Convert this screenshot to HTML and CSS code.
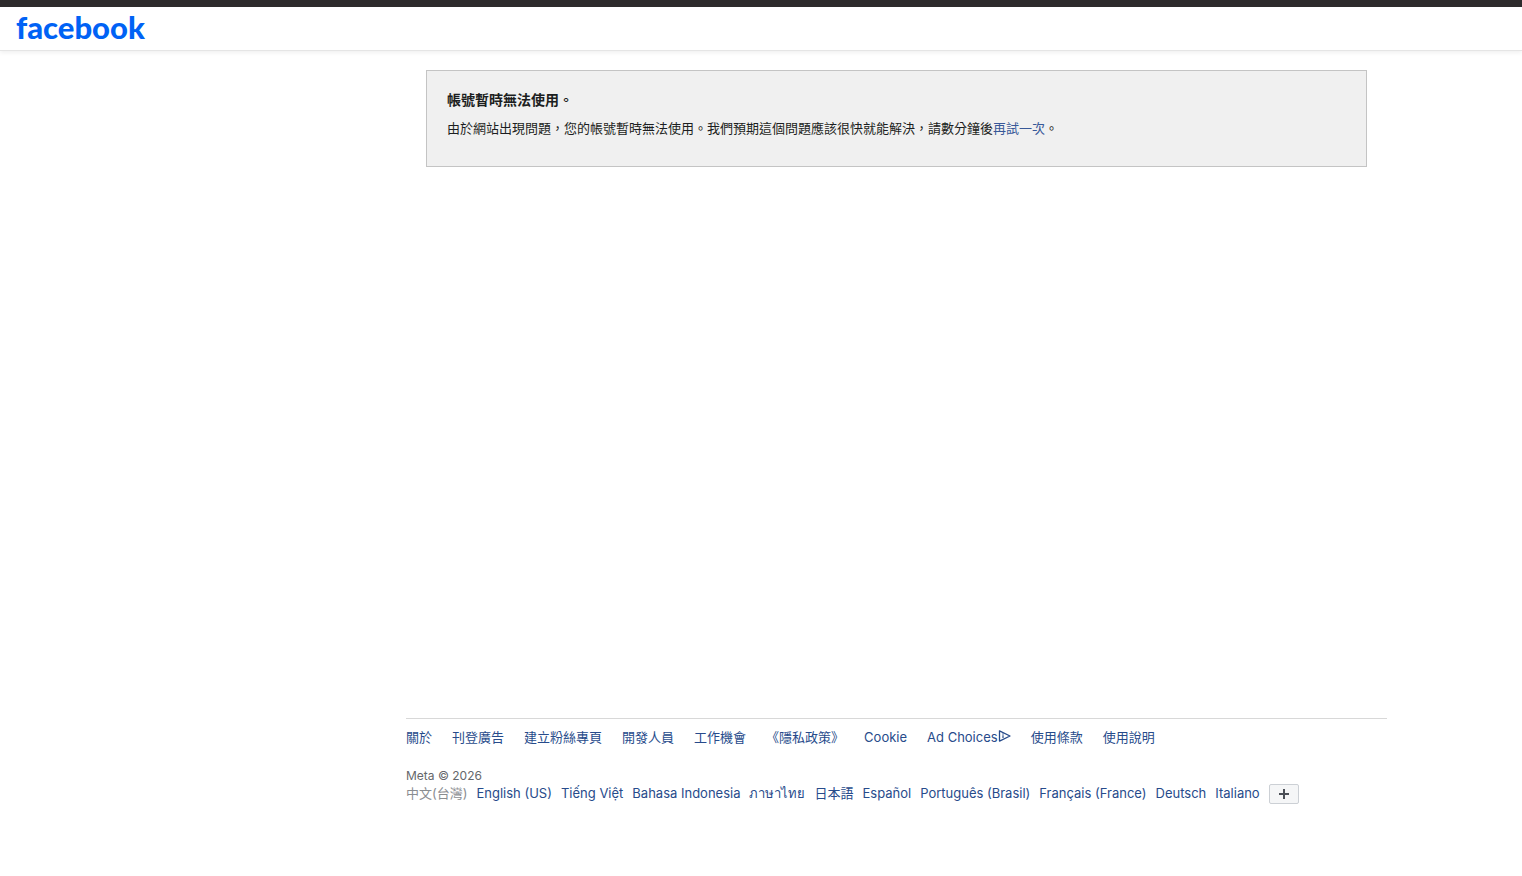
FILE: index.html
```html
<!DOCTYPE html>
<html lang="zh-Hant">
<head>
    <meta charset="utf-8">
    <meta name="viewport" content="width=device-width, initial-scale=1">
    <link rel="stylesheet" href="styles.css">
    <title>Facebook</title>
</head>
<body>
    <header class="header">
        <a class="logo" href="#">facebook</a>
    </header>
    <main class="content">
        <div class="notice">
            <h1>帳號暫時無法使用。</h1>
            <p>由於網站出現問題，您的帳號暫時無法使用。我們預期這個問題應該很快就能解決，請數分鐘後<a href="#">再試一次</a>。</p>
        </div>
    </main>
    <footer class="footer">
        <ul class="links">
            <li><a href="#">關於</a></li>
            <li><a href="#">刊登廣告</a></li>
            <li><a href="#">建立粉絲專頁</a></li>
            <li><a href="#">開發人員</a></li>
            <li><a href="#">工作機會</a></li>
            <li><a href="#">《隱私政策》</a></li>
            <li><a href="#">Cookie</a></li>
            <li>
                <a href="#">Ad Choices<svg width="13" height="12" viewBox="0 0 13 12" aria-hidden="true">
                    <path d="M1.5 0.9V11.1L12 6Z" fill="none" stroke="currentColor" stroke-width="1.3" stroke-linejoin="round"/>
                    <path d="M5 5.2V8" stroke="currentColor" stroke-width="1.2"/>
                    <circle cx="5" cy="4" r="0.7" fill="currentColor"/>
                </svg></a>
            </li>
            <li><a href="#">使用條款</a></li>
            <li><a href="#">使用說明</a></li>
        </ul>
        <div class="copyright">Meta © 2026</div>
        <ul class="languages">
            <li>中文(台灣)</li>
            <li><a href="#" lang="en">English (US)</a></li>
            <li><a href="#" lang="vi">Tiếng Việt</a></li>
            <li><a href="#" lang="id">Bahasa Indonesia</a></li>
            <li><a href="#" lang="th">ภาษาไทย</a></li>
            <li><a href="#" lang="ja">日本語</a></li>
            <li><a href="#" lang="es">Español</a></li>
            <li><a href="#" lang="pt">Português (Brasil)</a></li>
            <li><a href="#" lang="fr">Français (France)</a></li>
            <li><a href="#" lang="de">Deutsch</a></li>
            <li><a href="#" lang="it">Italiano</a></li>
            <li>
                <button class="more" type="button" aria-label="顯示更多語言">
                    <svg width="10" height="10" viewBox="0 0 10 10" aria-hidden="true"><path d="M5 0V10M0 5H10" stroke="currentColor" stroke-width="2"/></svg>
                </button>
            </li>
        </ul>
    </footer>
</body>
</html>
```

FILE: styles.css
```css
* { margin: 0; padding: 0; box-sizing: border-box; }
body { min-height: 100vh; display: flex; flex-direction: column; background: #fff; color: #1c1e21; font-family: Inter, "Noto Sans CJK TC", sans-serif; font-size: 13px; line-height: 18px; border-top: 7px solid #2d2b2c; }
a { color: #385898; text-decoration: none; }
a:hover { text-decoration: underline; }
ul { list-style: none; }

.header { height: 44px; padding: 0 16px; border-bottom: 1px solid #e5e5e5; box-shadow: 0 2px 4px rgba(0, 0, 0, 0.06); }
.logo { display: inline-block; color: #0062f5; font-family: Lato, sans-serif; font-size: 31px; font-weight: 900; line-height: 40px; }
.logo:hover { text-decoration: none; }

.content, .footer { width: 100%; max-width: 1251px; margin-left: auto; padding: 0 135px; }

.content { flex: 1; padding-top: 19px; }
.notice { margin: 0 20px; padding: 19px 20px 29px; background: #f0f0f0; border: 1px solid #c4c4c4; }
.notice h1 { font-size: 14px; line-height: 20px; font-weight: 700; margin-bottom: 9px; }

.footer { padding-bottom: 72px; }
.links { display: flex; flex-wrap: wrap; gap: 0 20px; padding-top: 9px; border-top: 1px solid #d8d8d8; }
.footer a { color: #274b8b; }
.copyright { margin-top: 22px; color: #65676b; font-size: 12px; line-height: 16px; }
.languages { display: flex; flex-wrap: wrap; align-items: flex-start; gap: 0 9px; color: #8a8d91; }
.more { display: flex; align-items: center; justify-content: center; width: 30px; height: 20px; background: #f5f6f7; border: 1px solid #ccd0d5; border-radius: 2px; color: #4b4f56; cursor: pointer; }
```
